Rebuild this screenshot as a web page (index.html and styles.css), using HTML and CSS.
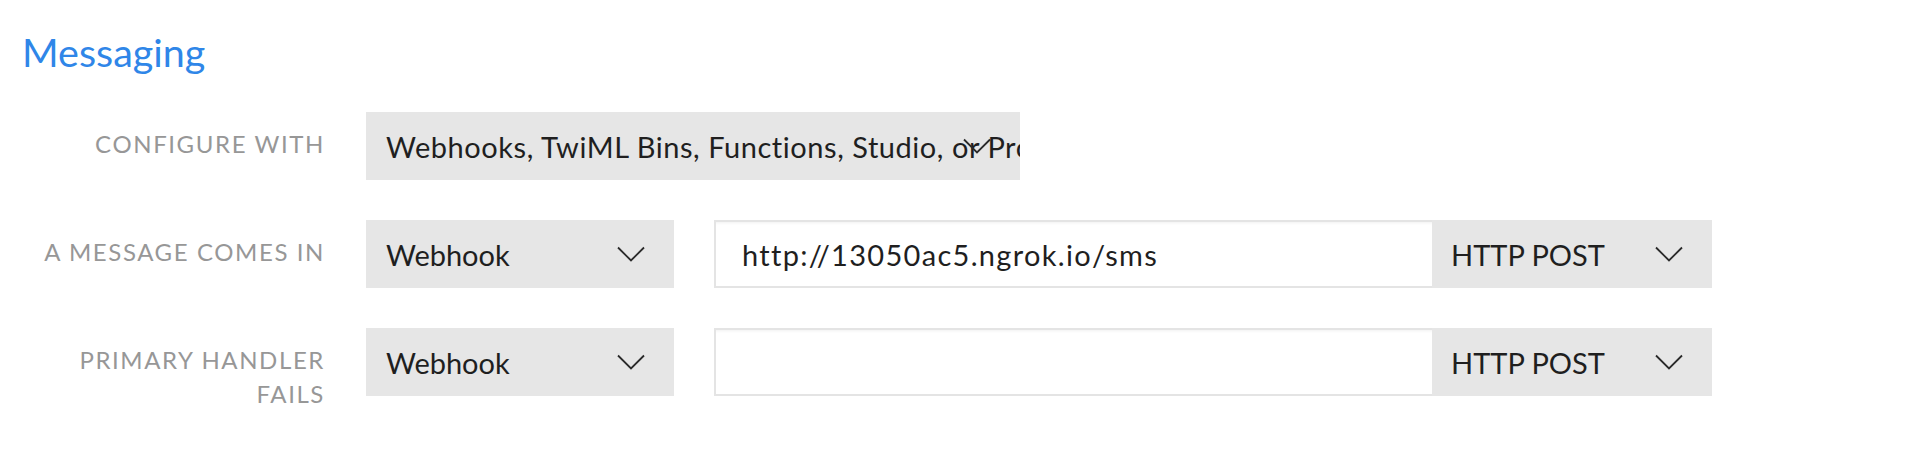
FILE: index.html
```html
<!DOCTYPE html>
<html lang="en">
<head>
<meta charset="utf-8">
<title>Messaging</title>
<link rel="stylesheet" href="styles.css">
</head>
<body>
<section class="panel">
  <h2 class="title">Messaging</h2>
  <div class="form">
    <div class="row">
      <div class="label">CONFIGURE WITH</div>
      <div class="controls">
        <div class="select select-wide">
          <span class="select-text select-text-long">Webhooks, TwiML Bins, Functions, Studio, or Proxy</span>
          <svg class="chevron" viewBox="0 0 28 16" aria-hidden="true"><path d="M1 1.5 L14 14.5 L27 1.5"/></svg>
        </div>
      </div>
    </div>
    <div class="row">
      <div class="label">A MESSAGE COMES IN</div>
      <div class="controls">
        <div class="select select-type">
          <span class="select-text">Webhook</span>
          <svg class="chevron" viewBox="0 0 28 16" aria-hidden="true"><path d="M1 1.5 L14 14.5 L27 1.5"/></svg>
        </div>
        <div class="url-group">
          <div class="input">http://13050ac5.ngrok.io/sms</div>
          <div class="select select-method">
            <span class="select-text">HTTP POST</span>
            <svg class="chevron" viewBox="0 0 28 16" aria-hidden="true"><path d="M1 1.5 L14 14.5 L27 1.5"/></svg>
          </div>
        </div>
      </div>
    </div>
    <div class="row">
      <div class="label">PRIMARY HANDLER<br>FAILS</div>
      <div class="controls">
        <div class="select select-type">
          <span class="select-text">Webhook</span>
          <svg class="chevron" viewBox="0 0 28 16" aria-hidden="true"><path d="M1 1.5 L14 14.5 L27 1.5"/></svg>
        </div>
        <div class="url-group">
          <div class="input"></div>
          <div class="select select-method">
            <span class="select-text">HTTP POST</span>
            <svg class="chevron" viewBox="0 0 28 16" aria-hidden="true"><path d="M1 1.5 L14 14.5 L27 1.5"/></svg>
          </div>
        </div>
      </div>
    </div>
  </div>
</section>
</body>
</html>
```

FILE: styles.css
```css
html, body {
  margin: 0;
  padding: 0;
  background: #ffffff;
}

body {
  font-family: "Lato", "Open Sans", sans-serif;
  color: #1f1f1f;
}

.panel {
  padding: 29px 0 0 22px;
}

.title {
  margin: 0;
  font-size: 39.5px;
  font-weight: 400;
  line-height: 46px;
  color: #2f86e8;
}

.form {
  margin-top: 37px;
  display: flex;
  flex-direction: column;
  gap: 40px;
}

.row {
  display: grid;
  grid-template-columns: 303px 1fr;
  column-gap: 41px;
  align-items: start;
}

.label {
  text-align: right;
  font-size: 24px;
  line-height: 34px;
  letter-spacing: 1.6px;
  color: #979797;
  padding-top: 15px;
}

.controls {
  display: flex;
  gap: 40px;
}

.select {
  position: relative;
  height: 68px;
  background: #e6e6e6;
  display: flex;
  align-items: center;
  padding-left: 20px;
  box-sizing: border-box;
  overflow: hidden;
  white-space: nowrap;
}

.select-text {
  font-size: 29px;
  color: #1f1f1f;
}

.select-text-long {
  letter-spacing: 0.55px;
}

.chevron {
  position: absolute;
  right: 29px;
  top: 26px;
  width: 28px;
  height: 16px;
  fill: none;
  stroke: #2a2a2a;
  stroke-width: 1.8;
}

.select-wide {
  width: 654px;
}

.select-type {
  width: 308px;
}

.url-group {
  display: flex;
}

.input {
  width: 718px;
  height: 68px;
  box-sizing: border-box;
  border: 2px solid #e4e4e4;
  border-right: none;
  box-shadow: inset 0 3px 3px -2px rgba(0, 0, 0, 0.06);
  padding-left: 26px;
  display: flex;
  align-items: center;
  font-size: 29px;
  letter-spacing: 1.3px;
  color: #1f1f1f;
  background: #ffffff;
}

.select-method {
  width: 280px;
  padding-left: 19px;
}
```
